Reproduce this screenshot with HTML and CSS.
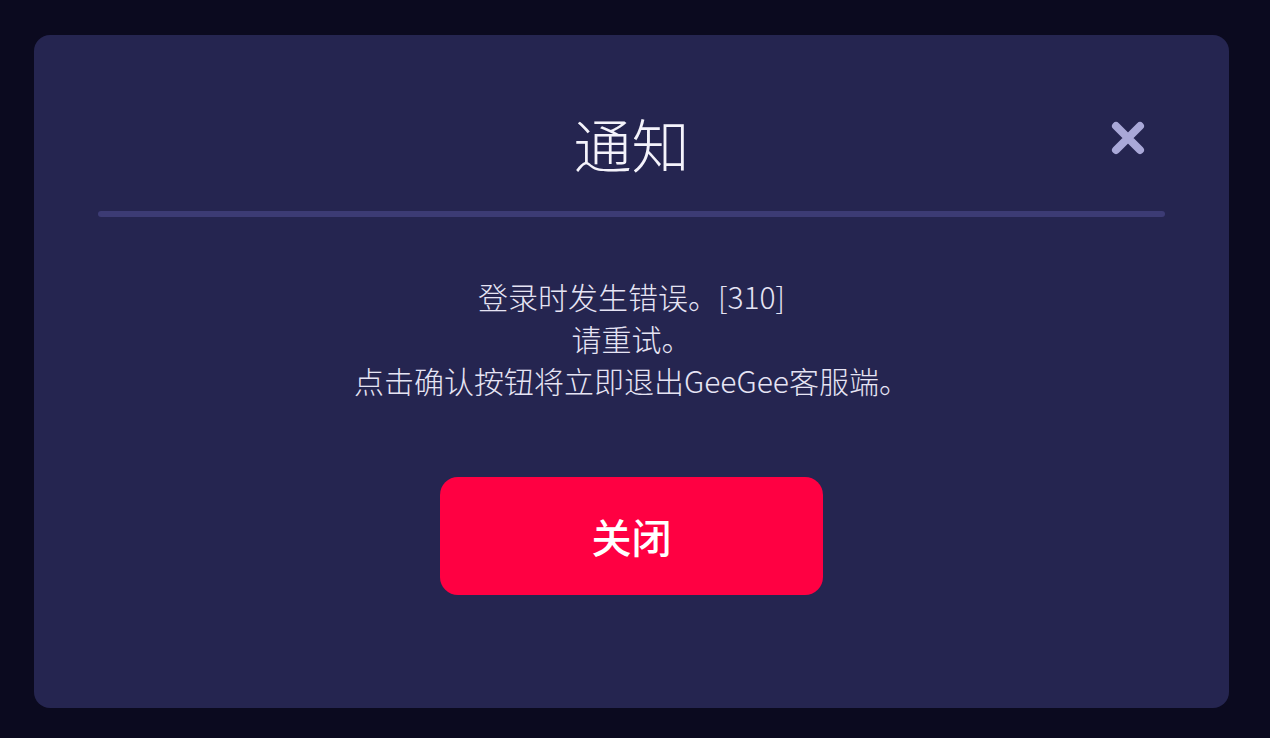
FILE: index.html
```html
<!DOCTYPE html>
<html lang="zh-CN">
<head>
<meta charset="utf-8">
<title>通知</title>
<link rel="stylesheet" href="styles.css">
</head>
<body>
<div class="dialog">
  <button class="close-x" aria-label="关闭">
    <svg width="36" height="36" viewBox="0 0 36 36"><path d="M6 6 L30 30 M30 6 L6 30" stroke="#a9a8d8" stroke-width="8" stroke-linecap="round"/></svg>
  </button>
  <h1 class="title">通知</h1>
  <div class="divider"></div>
  <div class="message">
    <p>登录时发生错误。[310]</p>
    <p>请重试。</p>
    <p>点击确认按钮将立即退出GeeGee客服端。</p>
  </div>
  <div class="actions">
    <button class="btn-close">关闭</button>
  </div>
</div>
</body>
</html>
```
FILE: styles.css
```css
html, body {
  margin: 0;
  padding: 0;
  background: #0b0a1f;
  font-family: "Noto Sans CJK SC", "Noto Sans", sans-serif;
}
body {
  padding: 35px 41px 30px 34px;
  height: 738px;
  box-sizing: border-box;
}
.dialog {
  position: relative;
  width: 1195px;
  height: 673px;
  background: #252550;
  border-radius: 16px;
  display: flex;
  flex-direction: column;
  align-items: center;
}
.close-x {
  position: absolute;
  top: 85px;
  right: 83px;
  width: 36px;
  height: 36px;
  padding: 0;
  border: 0;
  background: none;
  display: flex;
}
.title {
  margin: 72px 0 0;
  height: 72px;
  line-height: 72px;
  font-size: 58px;
  font-weight: 300;
  color: #f4f3fb;
}
.divider {
  align-self: stretch;
  margin: 32px 64px 0;
  height: 6px;
  background: #3c3b74;
  border-radius: 3px;
}
.message {
  margin-top: 58px;
  text-align: center;
  color: #e6e4f4;
  font-size: 30px;
  font-weight: 300;
  line-height: 42px;
}
.message p {
  margin: 0;
}
.actions {
  margin-top: 76px;
}
.btn-close {
  width: 383px;
  height: 118px;
  border: 0;
  border-radius: 18px;
  background: #ff0042;
  color: #fff;
  font-family: "Noto Sans CJK SC", sans-serif;
  font-size: 40px;
  font-weight: 500;
  padding: 0;
}
```
